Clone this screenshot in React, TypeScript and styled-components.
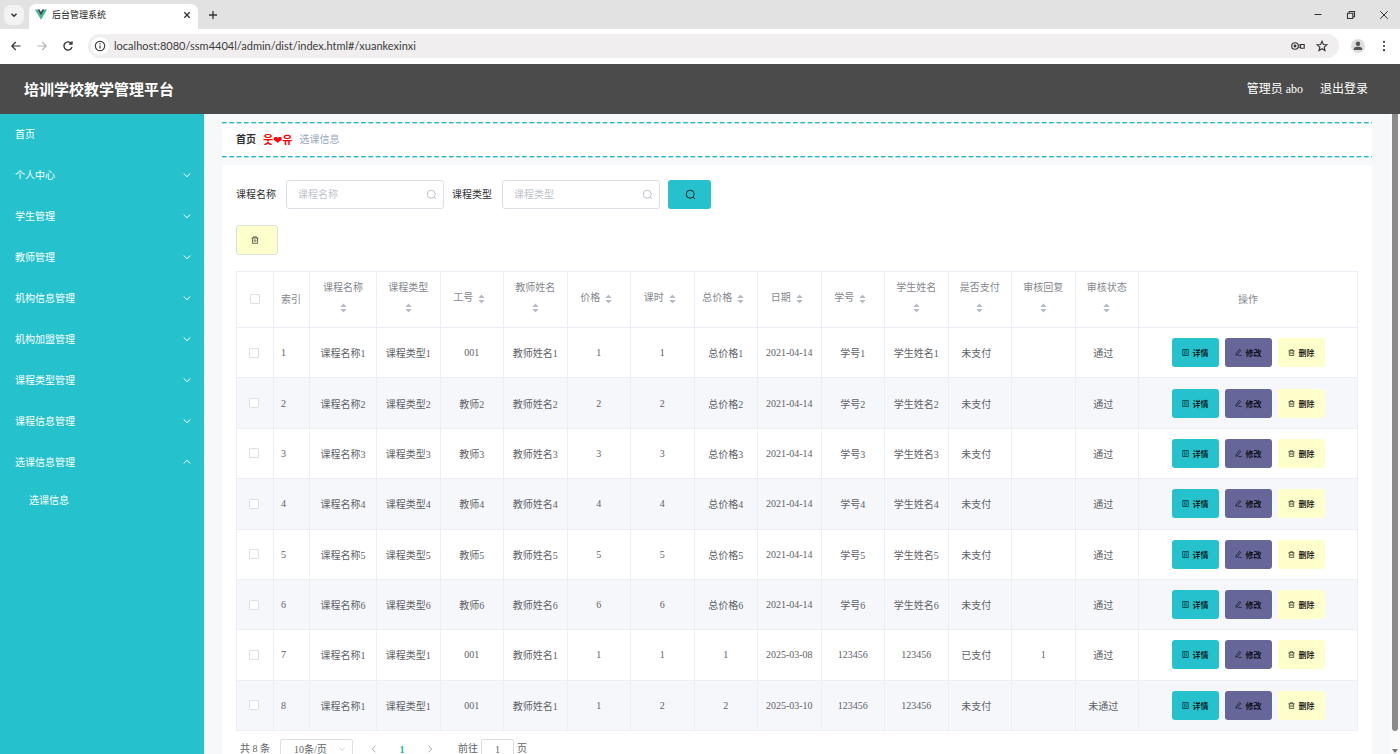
import React from "react";
import styled, { createGlobalStyle } from "styled-components";

const TEAL = "#25c2cd";
const SERIF = `"Liberation Serif", "Noto Sans CJK SC", serif`;
const SANS = `"Open Sans", "Noto Sans CJK SC", sans-serif`;

const GlobalStyle = createGlobalStyle`
  * { box-sizing: border-box; }
  body { margin: 0; overflow: hidden; font-family: ${SERIF}; font-size: 10px; }
  button, input, select { font-family: inherit; font-size: inherit; margin: 0; }
  button { cursor: pointer; }
`;

const Window = styled.div`
  display: flex;
  flex-direction: column;
  height: 100vh;
  background: #fff;
`;

/* ---------- browser chrome ---------- */
const TabStrip = styled.div`
  display: flex;
  align-items: center;
  flex: none;
  height: 29px;
  padding: 0 6px 0 4px;
  background: #e2e2e2;
`;
const ChromeButton = styled.button<{ $filled?: boolean; $muted?: boolean }>`
  display: flex;
  align-items: center;
  justify-content: center;
  flex: none;
  width: 20px;
  height: 20px;
  padding: 0;
  border: 0;
  border-radius: 7px;
  color: ${(p) => (p.$muted ? "#b5b5b5" : "#333")};
  background: ${(p) => (p.$filled ? "#f3f3f3" : "transparent")};
`;
const Tab = styled.div`
  display: flex;
  align-items: center;
  align-self: flex-end;
  gap: 5px;
  width: 169px;
  height: 25px;
  margin: 0 5px;
  padding: 0 1px 4px 6px;
  border-radius: 7px 7px 0 0;
  background: #fff;
  color: #222;
  font: 9px ${SANS};
`;
const TabTitle = styled.span`
  flex: 1;
`;
const WindowControls = styled.div`
  display: flex;
  gap: 13px;
  margin-left: auto;
`;
const Toolbar = styled.div`
  display: flex;
  align-items: center;
  flex: none;
  gap: 6px;
  height: 35px;
  padding: 0 6px 2px;
  background: #fff;
`;
const AddressBar = styled.div`
  display: flex;
  align-items: center;
  flex: 1;
  gap: 4px;
  height: 24px;
  margin: 0 3px 0 4px;
  padding: 0 7px 0 3px;
  border-radius: 12px;
  background: #f0eeef;
`;
const InfoBadge = styled.span`
  display: flex;
  align-items: center;
  justify-content: center;
  width: 18px;
  height: 18px;
  border-radius: 50%;
  background: #fff;
`;
const AddressInput = styled.input`
  flex: 1;
  padding: 0 0 0 1px;
  border: 0;
  outline: 0;
  background: transparent;
  color: #3c3c3c;
  && { font: 11px Lato, sans-serif; }
`;

/* ---------- application frame ---------- */
const AppHeader = styled.header`
  display: flex;
  align-items: center;
  justify-content: space-between;
  flex: none;
  height: 50px;
  padding: 0 32px 2px 24px;
  background: #4b4b4b;
  color: #fff;
`;
const AppTitle = styled.h1`
  margin: 0;
  font-size: 15px;
  font-weight: 700;
`;
const UserArea = styled.div`
  display: flex;
  gap: 17px;
  font-size: 12px;
`;
const HeaderLink = styled.a`
  color: inherit;
  text-decoration: none;
`;
const Frame = styled.div`
  display: flex;
  flex: 1;
  min-height: 0;
`;
const Sidebar = styled.nav`
  flex: none;
  width: 204px;
  background: ${TEAL};
`;
const MenuLink = styled.a<{ $kind: "home" | "group" | "child" }>`
  display: flex;
  align-items: center;
  justify-content: space-between;
  height: ${(p) => ({ home: 40, group: 41, child: 36 })[p.$kind]}px;
  padding: 0 12px ${(p) => (p.$kind === "group" ? 0 : 2)}px ${(p) => (p.$kind === "child" ? 29 : 15)}px;
  color: #fff;
  text-decoration: none;
`;
const Main = styled.main`
  display: flex;
  flex-direction: column;
  flex: 1;
  gap: 7px;
  min-width: 0;
  padding: 8px 18px 0;
  overflow: hidden;
  background: #f6f8fa;
`;
const DashLine = styled.svg`
  display: block;
  flex: none;
  width: 100%;
  height: 2px;
`;
const CrumbBox = styled.div`
  flex: none;
  background: #fff;
`;
const CrumbRow = styled.div`
  display: flex;
  align-items: center;
  gap: 7px;
  height: 32px;
  padding: 0 14px 3px;
`;
const CrumbHome = styled.a`
  color: #303133;
  font-weight: 700;
  text-decoration: none;
`;
const CrumbMark = styled.span`
  color: #f00;
  font: 700 11px "Noto Sans CJK KR", "DejaVu Sans", sans-serif;
  line-height: 14px;
`;
const CrumbCurrent = styled.span`
  color: #97a8be;
`;
const Card = styled.section`
  flex: 1 0 auto;
  padding: 15px 14px 20px;
  background: #fff;
`;
const ScrollTrack = styled.div`
  display: flex;
  flex-direction: column;
  align-items: center;
  flex: none;
  width: 10px;
  gap: 18px;
  padding-bottom: 1px;
  background: #fbfbfb;
`;
const ScrollThumb = styled.div`
  flex: 1;
  width: 6px;
  border-radius: 0 0 3px 3px;
  background: #8b8b8b;
`;

/* ---------- search form ---------- */
const SearchForm = styled.form`
  display: flex;
  align-items: center;
  gap: 8px;
`;
const Field = styled.div`
  display: flex;
  align-items: center;
  gap: 10px;
`;
const FieldLabel = styled.label`
  padding-bottom: 2px;
  color: #303133;
`;
const InputBox = styled.div`
  display: flex;
  align-items: center;
  width: 158px;
  height: 29px;
  padding: 0 6px 0 11px;
  border: 1px solid #dcdfe6;
  border-radius: 3px;
  color: #c0c4cc;
`;
const TextInput = styled.input`
  flex: 1;
  min-width: 0;
  padding: 0;
  border: 0;
  outline: 0;
  color: #606266;
  &::placeholder { color: #c0c4cc; }
`;
const SearchButton = styled.button`
  display: flex;
  align-items: center;
  justify-content: center;
  width: 43px;
  height: 29px;
  padding: 0 0 0 2px;
  border: 0;
  border-radius: 3px;
  background: ${TEAL};
  color: #222;
`;
const BulkRow = styled.div`
  display: flex;
  margin: 16px 0;
`;
const BulkDelete = styled.button`
  display: flex;
  align-items: center;
  width: 42px;
  height: 30px;
  padding: 0 0 0 14px;
  border: 1px solid #dcdfe6;
  border-radius: 3px;
  background: #ffffcc;
  color: #222;
`;

/* ---------- table ---------- */
const Table = styled.table`
  width: 100%;
  height: 460px;
  table-layout: fixed;
  border-collapse: separate;
  border-spacing: 0;
  border: solid #ebeef5;
  border-width: 1px 0 0 1px;
  color: #606266;
`;
const Col = styled.col<{ $w?: number }>`
  width: ${(p) => (p.$w ? `${p.$w}px` : "auto")};
`;
const Th = styled.th<{ $left?: boolean }>`
  height: 56px;
  padding: 6px 7px 7px;
  border: solid #ebeef5;
  border-width: 0 1px 1px 0;
  color: #85888e;
  font-weight: 400;
  line-height: 17px;
  text-align: ${(p) => (p.$left ? "left" : "center")};
`;
const Row = styled.tr`
  &:nth-child(even) { background: #f5f7fa; }
`;
const Td = styled.td<{ $left?: boolean }>`
  height: 50px;
  padding: 0 7px;
  border: solid #ebeef5;
  border-width: 0 1px 1px 0;
  text-align: ${(p) => (p.$left ? "left" : "center")};
  white-space: nowrap;
`;
const CheckTd = styled(Td)`
  padding: 0 10px 0 7px;
`;
const Status = styled.span`
  margin-right: 7px;
`;
const Sorter = styled.span`
  display: inline-flex;
  align-items: center;
  justify-content: center;
  width: 17px;
  height: 24px;
  vertical-align: middle;
`;
const Check = styled.input`
  display: block;
  width: 10px;
  height: 10px;
  appearance: none;
  border: 1px solid #dcdfe6;
  border-radius: 1px;
  background: #fff;
  && { margin: 0 auto; }
`;
const Actions = styled.div`
  display: flex;
  justify-content: center;
  gap: 6px;
`;
const ActionButton = styled.button<{ $bg: string }>`
  display: flex;
  align-items: center;
  justify-content: center;
  gap: 4px;
  width: 47px;
  height: 29px;
  padding: 0;
  border: 0;
  border-radius: 3px;
  background: ${(p) => p.$bg};
  color: #000;
  && { font-size: 8px; }
`;
const ActionText = styled.span`
  font-weight: 500;
  font-family: "Noto Sans CJK SC", sans-serif;
`;

/* ---------- pagination ---------- */
const Pager = styled.div`
  display: flex;
  align-items: center;
  height: 20px;
  margin: 8px 4px;
  color: #606266;
  line-height: 10px;
`;
const SizeBox = styled.div`
  display: flex;
  align-items: center;
  width: 73px;
  height: 20px;
  margin: 0 13px 0 10px;
  padding-right: 6px;
  border: 1px solid #dcdfe6;
  border-radius: 2px;
  color: #c0c4cc;
`;
const SizeSelect = styled.select`
  flex: 1;
  appearance: none;
  padding: 0 0 0 13px;
  border: 0;
  outline: 0;
  background: transparent;
  color: #606266;
`;
const PageButton = styled.button<{ $active?: boolean }>`
  display: flex;
  align-items: center;
  justify-content: center;
  width: 16px;
  height: 20px;
  margin-right: 12px;
  padding: 0;
  border: 0;
  background: transparent;
  color: ${(p) => (p.$active ? "#13b88c" : "#a9adb5")};
  font-weight: 700;
`;
const JumpLabel = styled.label`
  display: flex;
  align-items: center;
  gap: 3px;
  margin-left: 8px;
`;
const JumpInput = styled.input`
  width: 33px;
  height: 20px;
  padding: 0;
  border: 1px solid #dcdfe6;
  border-radius: 2px;
  color: #606266;
  text-align: center;
`;

/* ---------- icons ---------- */
const Icon = ({ d, size = 12, w = 1.2, box = 12 }: { d: string; size?: number; w?: number; box?: number }) => (
  <svg width={size} height={size} viewBox={`0 0 ${box} ${box}`} fill="none" stroke="currentColor" strokeWidth={w} aria-hidden>
    <path d={d} />
  </svg>
);
const DOWN = "M2 4.2 6 8 10 4.2";
const UP = "M2 7.8 6 4 10 7.8";
const TRASH = "M.8 3h10.4M4 3V1.2h4V3M2.2 3v8h7.6V3M4.8 5.2v3.6M7.2 5.2v3.6";
const DOC = "M1.3.8h9.4v10.4H1.3zM3.5 3.5h5M3.5 6h2M7.5 6v2.8M3.5 8.6h3";
const EDIT = "M7.6.8 9.8 2.4 4.4 9.6 1.6 10.8 2 7.8zM5.5 11.2h6";

const SearchIcon = () => (
  <svg width="11" height="11" viewBox="0 0 11 11" fill="none" stroke="currentColor" aria-hidden>
    <circle cx="5.2" cy="5.2" r="4" />
    <path d="M8 8l2 2" />
  </svg>
);
const SortIcon = () => (
  <svg width="7" height="10" viewBox="0 0 7 10" fill="#b6bac2" aria-hidden>
    <path d="M3.5 0.5 6.7 4H0.3zM3.5 9.5 0.3 6h6.4z" />
  </svg>
);

/* ---------- data ---------- */
const groups = ["个人中心", "学生管理", "教师管理", "机构信息管理", "机构加盟管理", "课程类型管理", "课程信息管理", "选课信息管理"];
const columns = ["课程名称", "课程类型", "工号", "教师姓名", "价格", "课时", "总价格", "日期", "学号", "学生姓名", "是否支付", "审核回复", "审核状态"];
const rows: string[][] = [
  ...[1, 2, 3, 4, 5, 6].map((n) => [
    `课程名称${n}`, `课程类型${n}`, n === 1 ? "001" : `教师${n}`, `教师姓名${n}`, `${n}`, `${n}`, `总价格${n}`,
    "2021-04-14", `学号${n}`, `学生姓名${n}`, "未支付", "", "通过",
  ]),
  ["课程名称1", "课程类型1", "001", "教师姓名1", "1", "1", "1", "2025-03-08", "123456", "123456", "已支付", "1", "通过"],
  ["课程名称1", "课程类型1", "001", "教师姓名1", "1", "2", "2", "2025-03-10", "123456", "123456", "未支付", "", "未通过"],
];
const statusColumns = ["是否支付", "审核状态"];

const Dashes = ({ id }: { id: string }) => (
  <DashLine aria-hidden>
    <defs>
      <pattern id={id} width="7.32" height="2" patternUnits="userSpaceOnUse">
        <rect width="4.8" height="1.4" fill="#2ab5c6" />
      </pattern>
    </defs>
    <rect width="100%" height="2" fill={`url(#${id})`} />
  </DashLine>
);

const BrowserChrome = () => (
  <>
    <TabStrip>
      <ChromeButton $filled aria-label="搜索标签页"><Icon d="M3.5 4.8 6 7.3 8.5 4.8" w={1.5} /></ChromeButton>
      <Tab>
        <svg width="12" height="11" viewBox="0 0 12 11" aria-hidden>
          <path d="M0 .5h2.4L6 6.8 9.6.5H12L6 10.8z" fill="#41b883" />
          <path d="M2.4.5h2.2L6 3 7.4.5h2.2L6 6.8z" fill="#35495e" />
        </svg>
        <TabTitle>后台管理系统</TabTitle>
        <ChromeButton aria-label="关闭标签页"><Icon d="M3.3 3.3l5.4 5.4M8.7 3.3 3.3 8.7" w={1.3} /></ChromeButton>
      </Tab>
      <ChromeButton aria-label="新标签页"><Icon d="M6 2v8M2 6h8" w={1.3} /></ChromeButton>
      <WindowControls>
        <ChromeButton aria-label="最小化"><Icon d="M2.5 5.5h7" w={1} /></ChromeButton>
        <ChromeButton aria-label="还原"><Icon d="M2.5 4.2h5.3v5.3H2.5zM4.2 4.2V2.5h5.3v5.3H7.8" w={1.1} /></ChromeButton>
        <ChromeButton aria-label="关闭"><Icon d="M2.2 2.2l7.6 7.6M9.8 2.2 2.2 9.8" w={1} /></ChromeButton>
      </WindowControls>
    </TabStrip>
    <Toolbar>
      <ChromeButton aria-label="后退"><Icon d="M10.5 6H2M5.8 2 1.8 6l4 4" w={1.2} /></ChromeButton>
      <ChromeButton $muted aria-label="前进"><Icon d="M1.5 6H10M6.2 2l4 4-4 4" w={1.2} /></ChromeButton>
      <ChromeButton aria-label="刷新"><Icon d="M9.4 3.6A4.1 4.1 0 1 0 10 7M10 1.2v3H7" w={1.3} /></ChromeButton>
      <AddressBar>
        <InfoBadge>
          <svg width="12" height="12" viewBox="0 0 12 12" fill="none" stroke="#444" strokeWidth="1.2" aria-hidden>
            <circle cx="6" cy="6" r="4.7" />
            <path d="M6 5.4v3M6 3.2v1.2" />
          </svg>
        </InfoBadge>
        <AddressInput aria-label="地址" defaultValue="localhost:8080/ssm4404l/admin/dist/index.html#/xuankexinxi" />
        <ChromeButton aria-label="密码">
          <svg width="14" height="10" viewBox="0 0 14 10" fill="none" stroke="currentColor" strokeWidth="1.1" aria-hidden>
            <circle cx="4" cy="5" r="3.3" />
            <circle cx="4" cy="5" r=".9" fill="currentColor" />
            <path d="M7.3 4h2.9M7.3 6.2h2M9.6 3.5h3.6v3.8H9.6z" />
          </svg>
        </ChromeButton>
        <ChromeButton aria-label="收藏"><Icon d="M6 1.3 7.4 4.5l3.4.3-2.6 2.3.8 3.4L6 8.7l-3 1.8.8-3.4L1.2 4.8l3.4-.3z" w={1.1} /></ChromeButton>
      </AddressBar>
      <ChromeButton aria-label="用户">
        <svg width="14" height="14" viewBox="0 0 14 14" aria-hidden>
          <circle cx="7" cy="7" r="7" fill="#dedede" />
          <circle cx="7" cy="4.8" r="2.2" fill="#555" />
          <path d="M2.8 11V9.8C2.8 8.4 5 7.8 7 7.8s4.2.6 4.2 2V11z" fill="#555" />
        </svg>
      </ChromeButton>
      <ChromeButton aria-label="菜单">
        <svg width="4" height="12" viewBox="0 0 4 12" fill="#333" aria-hidden>
          <circle cx="2" cy="1.8" r="1.1" /><circle cx="2" cy="6" r="1.1" /><circle cx="2" cy="10.2" r="1.1" />
        </svg>
      </ChromeButton>
    </Toolbar>
  </>
);

const SearchField = ({ id, label }: { id: string; label: string }) => (
  <Field>
    <FieldLabel htmlFor={id}>{label}</FieldLabel>
    <InputBox>
      <TextInput id={id} placeholder={label} />
      <SearchIcon />
    </InputBox>
  </Field>
);

const CourseTable = () => (
  <Table>
    <colgroup>
      <Col $w={37} />
      <Col $w={36} />
      <Col $w={67} />
      {columns.slice(1).map((c) => <Col key={c} />)}
      <Col $w={219} />
    </colgroup>
    <thead>
      <tr>
        <Th><Check type="checkbox" aria-label="全选" /></Th>
        <Th $left>索引</Th>
        {columns.map((c) => (
          <Th key={c}>{c}<Sorter><SortIcon /></Sorter></Th>
        ))}
        <Th>操作</Th>
      </tr>
    </thead>
    <tbody>
      {rows.map((cells, i) => (
        <Row key={i}>
          <CheckTd><Check type="checkbox" aria-label={`选择第${i + 1}行`} /></CheckTd>
          <Td $left>{i + 1}</Td>
          {cells.map((cell, j) => (
            <Td key={j}>{statusColumns.includes(columns[j]) ? <Status>{cell}</Status> : cell}</Td>
          ))}
          <Td>
            <Actions>
              <ActionButton $bg={TEAL}><Icon d={DOC} size={7} w={1} /><ActionText>详情</ActionText></ActionButton>
              <ActionButton $bg="#666699"><Icon d={EDIT} size={7} w={1} /><ActionText>修改</ActionText></ActionButton>
              <ActionButton $bg="#ffffcc"><Icon d={TRASH} size={7} w={1} /><ActionText>删除</ActionText></ActionButton>
            </Actions>
          </Td>
        </Row>
      ))}
    </tbody>
  </Table>
);

export default function App() {
  return (
    <Window>
      <GlobalStyle />
      <BrowserChrome />
      <AppHeader>
        <AppTitle>培训学校教学管理平台</AppTitle>
        <UserArea>
          <span>管理员 abo</span>
          <HeaderLink href="#/login">退出登录</HeaderLink>
        </UserArea>
      </AppHeader>
      <Frame>
        <Sidebar>
          <MenuLink $kind="home" href="#/">首页</MenuLink>
          {groups.map((g, i) => (
            <MenuLink key={g} $kind="group" href="#/">
              {g}
              <Icon d={i === groups.length - 1 ? UP : DOWN} size={10} />
            </MenuLink>
          ))}
          <MenuLink $kind="child" href="#/xuankexinxi">选课信息</MenuLink>
        </Sidebar>
        <Main>
          <CrumbBox>
            <Dashes id="dash-top" />
            <CrumbRow>
              <CrumbHome href="#/">首页</CrumbHome>
              <CrumbMark>웃❤유</CrumbMark>
              <CrumbCurrent>选课信息</CrumbCurrent>
            </CrumbRow>
            <Dashes id="dash-bottom" />
          </CrumbBox>
          <Card>
            <SearchForm onSubmit={(e) => e.preventDefault()}>
              <SearchField id="course-name" label="课程名称" />
              <SearchField id="course-type" label="课程类型" />
              <SearchButton aria-label="查询"><SearchIcon /></SearchButton>
            </SearchForm>
            <BulkRow>
              <BulkDelete aria-label="批量删除"><Icon d={TRASH} size={8} w={1} /></BulkDelete>
            </BulkRow>
            <CourseTable />
            <Pager>
              <span>共 8 条</span>
              <SizeBox>
                <SizeSelect aria-label="每页条数"><option>10条/页</option></SizeSelect>
                <Icon d={DOWN} size={8} />
              </SizeBox>
              <PageButton aria-label="上一页"><Icon d="M7.7 2 4 6l3.7 4" size={10} /></PageButton>
              <PageButton $active>1</PageButton>
              <PageButton aria-label="下一页"><Icon d="M4.3 2 8 6l-3.7 4" size={10} /></PageButton>
              <JumpLabel>
                <span>前往</span>
                <JumpInput defaultValue="1" />
                <span>页</span>
              </JumpLabel>
            </Pager>
          </Card>
        </Main>
        <ScrollTrack>
          <ScrollThumb />
          <svg width="6" height="4" viewBox="0 0 6 4" fill="#777" aria-hidden><path d="M0 0h6L3 4z" /></svg>
        </ScrollTrack>
      </Frame>
    </Window>
  );
}
